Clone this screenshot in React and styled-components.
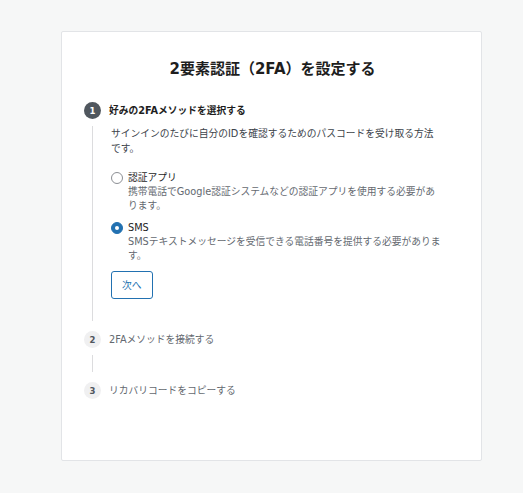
import React, { useState } from "react";
import styled, { createGlobalStyle } from "styled-components";

const Global = createGlobalStyle`
  html, body { margin: 0; padding: 0; background: #f6f7f7; }
  body { font-family: "DejaVu Sans", "Noto Sans CJK JP", sans-serif; -webkit-font-smoothing: antialiased; }
  * { box-sizing: border-box; }
`;

const Page = styled.div`
  padding: 31px 0 0 61px;
  min-height: 493px;
`;

const Card = styled.div`
  width: 421px;
  min-height: 430px;
  background: #fff;
  border: 1px solid #e2e4e7;
  border-radius: 2px;
  padding: 25px 36px 40px 22px;
`;

const Title = styled.h1`
  margin: 0 0 21px 16px;
  font-size: 15px;
  line-height: 24px;
  font-weight: 700;
  color: #1e1e1e;
  text-align: center;
`;

const Steps = styled.ol`
  list-style: none;
  margin: 0;
  padding: 0;
`;

const Step = styled.li`
  display: flex;
  flex-direction: column;
`;

const StepHead = styled.div`
  display: flex;
  align-items: center;
  gap: 8px;
  height: 17px;
`;

const Badge = styled.span`
  width: 17px;
  height: 17px;
  border-radius: 50%;
  flex: none;
  display: flex;
  align-items: center;
  justify-content: center;
  font-size: 8.5px;
  font-weight: 700;
  background: ${(p) => (p.$active ? "#50575e" : "#f0f0f1")};
  color: ${(p) => (p.$active ? "#fff" : "#50575e")};
`;

const StepLabel = styled.span`
  font-size: 9.75px;
  line-height: 15px;
  font-weight: ${(p) => (p.$active ? 700 : 400)};
  color: ${(p) => (p.$active ? "#1e1e1e" : "#646970")};
`;

const StepBody = styled.div`
  margin: 7px 0 10px 8px;
  border-left: 1px solid #dcdcde;
  padding: 0 0 ${(p) => (p.$active ? "22px" : "0")} 18px;
  min-height: ${(p) => (p.$active ? "0" : "17px")};
`;

const Desc = styled.p`
  margin: 0 0 15px;
  max-width: 328px;
  font-size: 9.75px;
  line-height: 15px;
  color: #3c434a;
`;

const Options = styled.div`
  display: flex;
  flex-direction: column;
  gap: 8px;
`;

const Option = styled.label`
  display: grid;
  grid-template-columns: 12px 1fr;
  column-gap: 5px;
  cursor: pointer;
`;

const Radio = styled.span`
  width: 12px;
  height: 12px;
  margin-top: 1px;
  border-radius: 50%;
  border: 1px solid ${(p) => (p.$checked ? "#2271b1" : "#8c8f94")};
  background: ${(p) => (p.$checked ? "#2271b1" : "#fff")};
  display: flex;
  align-items: center;
  justify-content: center;
  &::after {
    content: "";
    width: 4px;
    height: 4px;
    border-radius: 50%;
    background: #fff;
    display: ${(p) => (p.$checked ? "block" : "none")};
  }
`;

const OptionText = styled.div`
  display: flex;
  flex-direction: column;
  max-width: 315px;
`;

const OptionTitle = styled.span`
  font-size: 9.75px;
  line-height: 14px;
  color: #1e1e1e;
`;

const OptionDesc = styled.span`
  font-size: 9.75px;
  line-height: 14px;
  color: #646970;
`;

const Button = styled.button`
  margin-top: 8px;
  height: 28px;
  padding: 0 10px;
  background: #fff;
  border: 1px solid #2271b1;
  border-radius: 3px;
  color: #2271b1;
  font-family: inherit;
  font-size: 9.75px;
  cursor: pointer;
`;

export default function App() {
  const [method, setMethod] = useState("sms");
  const options = [
    { id: "app", title: "認証アプリ", desc: "携帯電話でGoogle認証システムなどの認証アプリを使用する必要があります。" },
    { id: "sms", title: "SMS", desc: "SMSテキストメッセージを受信できる電話番号を提供する必要があります。" },
  ];
  return (
    <Page>
      <Global />
      <Card>
        <Title>2要素認証（2FA）を設定する</Title>
        <Steps>
          <Step>
            <StepHead>
              <Badge $active>1</Badge>
              <StepLabel $active>好みの2FAメソッドを選択する</StepLabel>
            </StepHead>
            <StepBody $active>
              <Desc>サインインのたびに自分のIDを確認するためのパスコードを受け取る方法です。</Desc>
              <Options>
                {options.map((o) => (
                  <Option key={o.id} onClick={() => setMethod(o.id)}>
                    <Radio $checked={method === o.id} />
                    <OptionText>
                      <OptionTitle>{o.title}</OptionTitle>
                      <OptionDesc>{o.desc}</OptionDesc>
                    </OptionText>
                  </Option>
                ))}
              </Options>
              <Button>次へ</Button>
            </StepBody>
          </Step>
          <Step>
            <StepHead>
              <Badge>2</Badge>
              <StepLabel>2FAメソッドを接続する</StepLabel>
            </StepHead>
            <StepBody />
          </Step>
          <Step>
            <StepHead>
              <Badge>3</Badge>
              <StepLabel>リカバリコードをコピーする</StepLabel>
            </StepHead>
          </Step>
        </Steps>
      </Card>
    </Page>
  );
}
